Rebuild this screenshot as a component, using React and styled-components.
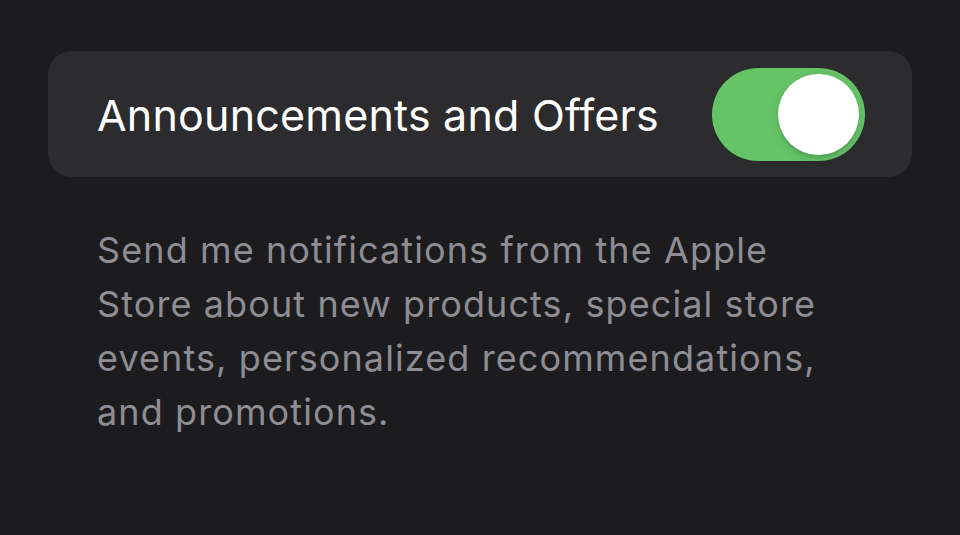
import React from "react";
import styled, { createGlobalStyle } from "styled-components";

const GlobalStyle = createGlobalStyle`
  html, body {
    margin: 0;
    padding: 0;
    background: #1c1c1e;
  }
  body {
    font-family: "Inter", "Noto Sans", sans-serif;
    -webkit-font-smoothing: antialiased;
  }
`;

const Page = styled.div`
  width: 960px;
  height: 535px;
  box-sizing: border-box;
  padding: 51px 48px 0 48px;
  background: #1c1c1e;
`;

const Card = styled.div`
  display: flex;
  align-items: center;
  justify-content: space-between;
  height: 126px;
  box-sizing: border-box;
  padding: 2px 47px 0 49px;
  background: #2c2c2e;
  border-radius: 24px;
`;

const Label = styled.span`
  font-size: 43px;
  font-weight: 400;
  color: #ffffff;
  letter-spacing: 0.2px;
`;

const Toggle = styled.button`
  position: relative;
  width: 153px;
  height: 93px;
  margin-top: -2px;
  border: none;
  padding: 0;
  border-radius: 47px;
  background: ${(p) => (p.$on ? "#65c466" : "#39393d")};
  cursor: pointer;
`;

const Knob = styled.span`
  position: absolute;
  top: 6px;
  left: ${(p) => (p.$on ? "66px" : "6px")};
  width: 81px;
  height: 81px;
  border-radius: 50%;
  background: #ffffff;
  box-shadow: 0 3px 8px rgba(0, 0, 0, 0.15), 0 3px 1px rgba(0, 0, 0, 0.06);
`;

const Footer = styled.p`
  margin: 46px 0 0 49px;
  width: 740px;
  font-size: 36px;
  line-height: 54px;
  color: #8d8d93;
  letter-spacing: 1.1px;
`;

export default function App() {
  const [on, setOn] = React.useState(true);
  return (
    <Page>
      <GlobalStyle />
      <Card>
        <Label>Announcements and Offers</Label>
        <Toggle $on={on} onClick={() => setOn(!on)} aria-pressed={on}>
          <Knob $on={on} />
        </Toggle>
      </Card>
      <Footer>
        Send me notifications from the Apple Store about new products, special
        store events, personalized recommendations, and promotions.
      </Footer>
    </Page>
  );
}
